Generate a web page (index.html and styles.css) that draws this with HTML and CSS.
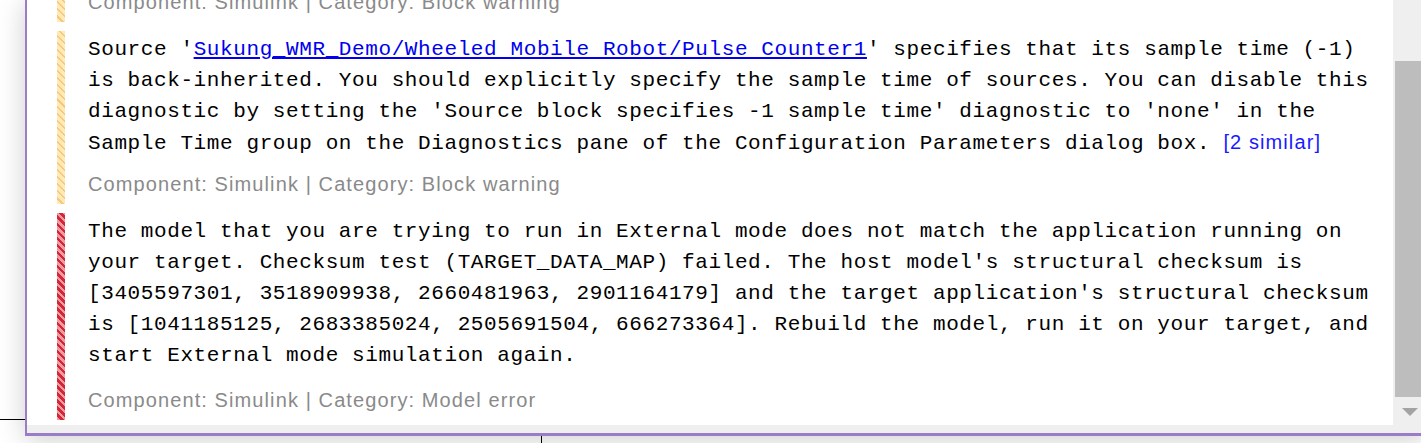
FILE: index.html
```html
<!DOCTYPE html>
<html>
<head>
<meta charset="utf-8">
<title>Diagnostic Viewer</title>
<link rel="stylesheet" href="styles.css">
</head>
<body>
<div class="desktop">
  <div class="wire wire-h"></div>
  <div class="wire wire-v"></div>
  <div class="dialog">
    <div class="dialog-body">
      <div class="messages">
        <div class="msg-list">
          <div class="msg msg-warning msg-cut">
            <div class="stripe"></div>
            <div class="msg-main">
              <p class="meta">Component: Simulink | Category: Block warning</p>
            </div>
          </div>
          <div class="msg msg-warning">
            <div class="stripe"></div>
            <div class="msg-main">
              <p class="text">Source '<a class="path-link" href="#">Sukung_WMR_Demo/Wheeled Mobile Robot/Pulse Counter1</a>' specifies that its sample time (-1) is back-inherited. You should explicitly specify the sample time of sources. You can disable this diagnostic by setting the 'Source block specifies -1 sample time' diagnostic to 'none' in the Sample Time group on the Diagnostics pane of the Configuration Parameters dialog box. <a class="similar" href="#">[2 similar]</a></p>
              <p class="meta">Component: Simulink | Category: Block warning</p>
            </div>
          </div>
          <div class="msg msg-error">
            <div class="stripe"></div>
            <div class="msg-main">
              <p class="text">The model that you are trying to run in External mode does not match the application running on your target. Checksum test (TARGET_DATA_MAP) failed. The host model's structural checksum is [3405597301, 3518909938, 2660481963, 2901164179] and the target application's structural checksum is [1041185125, 2683385024, 2505691504, 666273364]. Rebuild the model, run it on your target, and start External mode simulation again.</p>
              <p class="meta">Component: Simulink | Category: Model error</p>
            </div>
          </div>
        </div>
      </div>
      <div class="vscroll">
        <div class="thumb"></div>
        <div class="arrow-down"></div>
      </div>
    </div>
    <div class="hstrip"></div>
  </div>
</div>
</body>
</html>
```

FILE: styles.css
```css
html, body {
  margin: 0;
  padding: 0;
  background: #ffffff;
}

.desktop {
  position: relative;
  width: 1421px;
  height: 443px;
  overflow: hidden;
  background: #ffffff;
}

.wire {
  position: absolute;
  background: #000000;
}

.wire-h {
  left: 0;
  top: 419px;
  width: 26px;
  height: 1px;
}

.wire-v {
  left: 541px;
  top: 430px;
  width: 1px;
  height: 20px;
}

.dialog {
  position: absolute;
  left: 25px;
  top: 0;
  width: 1400px;
  border-left: 2px solid #9a7dc6;
  border-bottom: 3px solid #9a7dc6;
  background: #efefef;
  box-shadow: 0 3px 26px rgba(0, 0, 0, 0.2);
  display: flex;
  flex-direction: column;
}

.dialog-body {
  display: flex;
  height: 425px;
}

.messages {
  width: 1366px;
  height: 425px;
  background: #ffffff;
  overflow: hidden;
}

.msg-list {
  margin-top: -10px;
  padding-left: 30px;
  display: flex;
  flex-direction: column;
  gap: 9px;
}

.msg {
  display: flex;
  align-items: stretch;
}

.stripe {
  width: 8px;
  flex: none;
}

.msg-warning .stripe {
  background: repeating-linear-gradient(45deg, #ffe9b5 0 3.5px, #f9c77c 3.5px 5px);
}

.msg-error .stripe {
  background: repeating-linear-gradient(45deg, #ef99a1 0 2.5px, #d32637 2.5px 5px);
}

.msg-main {
  width: 1293px;
  margin-left: 23px;
  padding-top: 3px;
  padding-bottom: 8px;
}

.msg-cut .msg-main {
  padding-top: 0;
}

.text {
  margin: 0;
  font-family: "Liberation Mono", "DejaVu Sans Mono", monospace;
  font-size: 21px;
  letter-spacing: 0.6px;
  line-height: 31px;
  color: #000000;
}

.path-link {
  color: #0000ee;
  text-decoration: underline;
}

.similar {
  font-family: "Liberation Sans", Arial, sans-serif;
  font-size: 20px;
  letter-spacing: 1.1px;
  color: #1a1aff;
  text-decoration: none;
}

.meta {
  margin: 13px 0 0 0;
  font-family: "Liberation Sans", Arial, sans-serif;
  font-size: 20px;
  letter-spacing: 1.1px;
  line-height: 24px;
  color: #8a8a8a;
}

.msg-error .meta {
  margin-top: 17px;
}

.msg-cut .meta {
  margin-top: 0;
}

.vscroll {
  width: 34px;
  background: #efefef;
  display: flex;
  flex-direction: column;
  align-items: center;
}

.thumb {
  margin-top: 61px;
  width: 30px;
  height: 336px;
  background: #bdbdbd;
}

.arrow-down {
  margin-top: 11px;
  width: 0;
  height: 0;
  border-left: 8px solid transparent;
  border-right: 8px solid transparent;
  border-top: 8px solid #a3a3a3;
}

.hstrip {
  height: 8px;
  background: #efefef;
}
```
